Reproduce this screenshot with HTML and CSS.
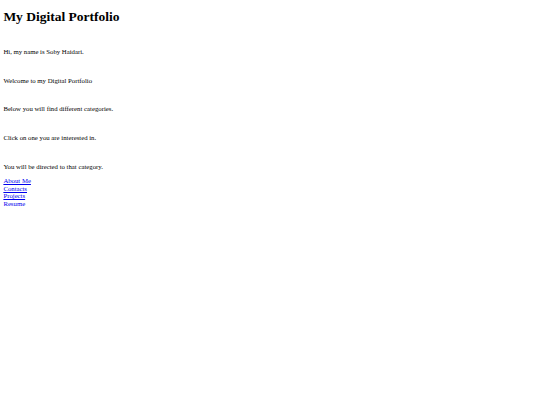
FILE: index.html
```html
<!DOCTYPE html>
<html>
<head>
<meta charset="utf-8">
<title>My Digital Portfolio</title>
<link rel="stylesheet" href="styles.css">
</head>
<body class="page">
<h1 class="title">My Digital Portfolio</h1>
<br>
<p class="line">Hi, my name is Soby Haidari.</p>
<br>
<p class="line">Welcome to my Digital Portfolio</p>
<br>
<p class="line">Below you will find different categories.</p>
<br>
<p class="line">Click on one you are interested in.</p>
<br>
<p class="line">You will be directed to that category.</p>
<nav class="links">
<a class="link" href="#about">About Me</a><br>
<a class="link" href="#contacts">Contacts</a><br>
<a class="link" href="#projects">Projects</a><br>
<a class="link" href="#resume">Resume</a>
</nav>
</body>
</html>
```
FILE: styles.css
```css
html {
  background: #ffffff;
}
.page {
  margin: 3.375px;
  font-family: "Liberation Serif", "Times New Roman", serif;
  font-size: 6.75px;
  line-height: 7.6px;
  color: #000000;
}
.title {
  font-size: 13.5px;
  line-height: 14.6px;
  font-weight: bold;
  margin: 6.5px 0 9px;
}
.line {
  margin: 6.75px 0;
}
.links {
  display: block;
}
.link {
  color: #0000ee;
  text-decoration: underline;
}
```
